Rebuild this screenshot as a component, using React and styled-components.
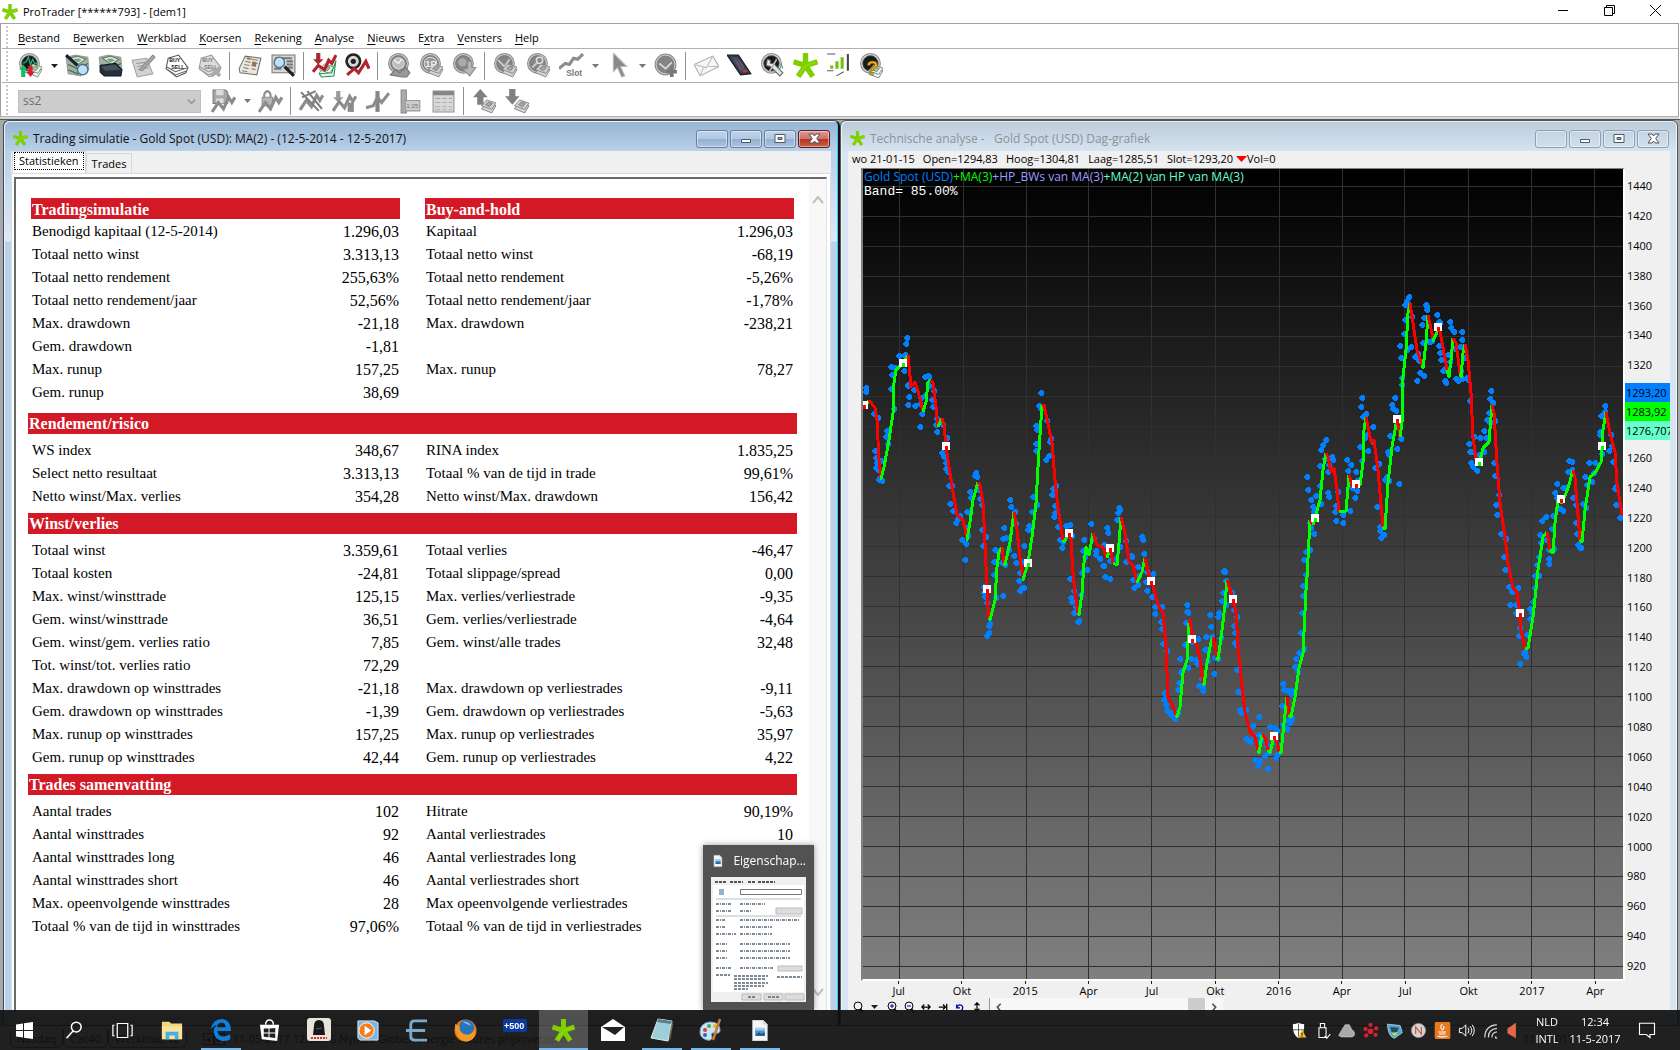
import React from "react";
import styled, { createGlobalStyle, css } from "styled-components";

const GlobalStyle = createGlobalStyle`
  * { box-sizing: border-box; }
  body {
    margin: 0;
    background: #fff;
    color: #000;
    font: 12px/16px "Open Sans", "Noto Sans", sans-serif;
    overflow: hidden;
  }
  svg { display: block; }
`;

const plain = css`
  margin: 0;
  padding: 0;
  border: 0;
  background: none;
  font: inherit;
  color: inherit;
`;

/* ---------- shell ---------- */

const Shell = styled.div`
  display: flex;
  flex-direction: column;
  height: 100vh;
`;

const AppTitle = styled.header`
  display: flex;
  align-items: center;
  height: 23px;
  padding-left: 2px;
  gap: 5px;
  font-size: 11px;
`;

const Caption = styled.div`
  display: flex;
  margin-left: auto;
  height: 20px;
  margin-right: 2px;
  align-self: flex-start;
`;

const CaptionButton = styled.button`
  ${plain}
  width: 46px;
  display: grid;
  place-items: center;
`;

const Bars = styled.div`
  border: 1px solid #a0a0a0;
  border-bottom-color: #b4b4b4;
  margin-right: 1px;
  box-shadow: 0 2px 0 #d8d8d8;
`;

const Bar = styled.div`
  display: flex;
  align-items: center;
  height: ${({ $height }) => $height}px;
  padding: ${({ $top = 0 }) => $top}px 0 0 ${({ $indent }) => $indent}px;
  margin-left: 1px;
  border-bottom: ${({ $last }) => ($last ? "0" : "1px solid #b0b0b0")};
  background: repeating-linear-gradient(#c8c8c8 0 2px, transparent 2px 4px) 4px 2px / 2px 100% no-repeat;
`;

const MenuList = styled.nav`
  display: flex;
  gap: 13px;
  font-size: 11px;
`;

const MenuItem = styled.button`
  ${plain}
  u { text-underline-offset: 2px; }
`;

const ToolButton = styled.button`
  ${plain}
  flex: none;
  width: 33px;
  height: 28px;
  display: grid;
  place-items: center;
`;

const CaretButton = styled.button`
  ${plain}
  width: 14px;
  height: 28px;
  display: grid;
  place-items: center;
`;

const Separator = styled.i`
  width: 1px;
  height: 28px;
  margin: 0 4px 0 3px;
  background: #909090;
`;

const Combo = styled.label`
  position: relative;
  display: flex;
  align-items: center;
  width: 183px;
  height: 23px;
  margin-right: 6px;
  border: 1px solid #bfbfbf;
  background: #ccc;

  select {
    ${plain}
    appearance: none;
    width: 100%;
    height: 100%;
    padding-left: 4px;
    color: #6d6d6d;
    font-size: 12px;
    opacity: 1;
  }

  svg {
    position: absolute;
    right: 4px;
  }
`;

const Workspace = styled.main`
  flex: 1;
  min-height: 0;
  display: grid;
  grid-template-columns: 837fr 838fr;
  margin-top: 2px;
  padding: 0 2px 0 3px;
  border-top: 1px solid #555;
  background: #a8a8a8;
`;

/* ---------- child windows ---------- */

const Window = styled.section`
  display: flex;
  flex-direction: column;
  min-width: 0;
  min-height: 0;
  padding: 0 7px 9px;
  border: 1px solid ${({ $active }) => ($active ? "#3a4a5a" : "#555")};
  border-right: ${({ $active }) => ($active ? "2px solid #111" : "1px solid #555")};
  border-radius: 6px 6px 0 0;
  box-shadow: inset 1px 1px 0 #e8f2fb, inset -1px 0 0 ${({ $active }) => ($active ? "#3cc8f0" : "#eef5fb")};
  background: ${({ $active }) =>
    $active
      ? "linear-gradient(#98b4d2, #b9d1ea 31px, #dde9f6 120px, #b9d1ea 121px)"
      : "linear-gradient(#bccbda, #d7e4f2 31px)"};
`;

const WindowTitle = styled.header`
  display: flex;
  align-items: center;
  flex: none;
  height: 30px;
  padding: 5px 1px 0 2px;
  font-size: 12px;
  color: ${({ $active }) => ($active ? "#111" : "#8c9299")};

  h2 {
    margin: 0 auto 0 5px;
    font: inherit;
    white-space: pre;
  }
`;

const FrameButtons = styled.div`
  display: flex;
  gap: 2px;
`;

const FrameButton = styled.button`
  ${plain}
  width: 32px;
  height: 18px;
  display: grid;
  place-items: center;
  border: 1px solid ${({ $tone }) => (($tone === "close") ? "#5c1a1a" : ($tone === "idle") ? "#8e9fb8" : "#6b7f99")};
  border-radius: 3px;
  box-shadow: inset 0 0 0 1px rgba(255, 255, 255, 0.45);
  background: ${({ $tone }) =>
    $tone === "close"
      ? "linear-gradient(#dc9a92, #cf7267 48%, #b93420 52%, #c9604a)"
      : $tone === "idle"
        ? "linear-gradient(#c5d3e2, #d2dfec)"
        : "linear-gradient(#c0d4ea, #b0c8e2 48%, #93b0d0 52%, #aac4e0)"};
`;

const Client = styled.div`
  flex: 1;
  min-height: 0;
  display: flex;
  flex-direction: column;
  background: #f0f0f0;
`;

/* ---------- statistics window ---------- */

const Tabs = styled.div`
  display: flex;
  align-items: flex-end;
  height: 22px;
  padding-left: 1px;
`;

const Tab = styled.button`
  ${plain}
  height: ${({ $selected }) => ($selected ? 22 : 20)}px;
  padding: ${({ $selected }) => ($selected ? "0 6px 3px" : "0 5px")};
  font-size: 11px;
  border: 1px solid #d9d9d9;
  border-bottom: 0;
  background: ${({ $selected }) => ($selected ? "#fff" : "#f0f0f0")};

  span {
    display: block;
    margin: 0 -4px;
    padding: 0 4px;
    outline: ${({ $selected }) => ($selected ? "1px dotted #000" : "0")};
  }
`;

const TabPanel = styled.div`
  flex: 1;
  min-height: 0;
  display: flex;
  border: 1px solid #dcdcdc;
  padding: 3px 3px 2px 2px;
  background: #fff;
`;

const ReportBox = styled.div`
  flex: 1;
  display: flex;
  border: 2px solid #696969;
  border-right: 1px solid #e3e3e3;
  border-bottom-color: #e3e3e3;
  overflow: hidden;
`;

const Report = styled.div`
  flex: 1;
  padding: 19px 12px 0;
  font: 16px/23px "Liberation Serif", serif;
`;

const Block = styled.table`
  width: calc(100% - 6px);
  margin: ${({ $first }) => ($first ? "0 3px 9px" : "5px 3px 5px")};
  border-collapse: separate;
  border-spacing: 0;
  table-layout: fixed;

  col.value { width: 110px; }
  col.gap { width: 25px; }
  td, th { height: 23px; padding: 0 1px; text-align: left; font-weight: normal; white-space: nowrap; }
  td { text-align: right; }
  tbody th { font-size: 15px; }

  thead th {
    height: 22px;
    line-height: 21px;
    font-weight: bold;
    color: #fff;
    background: linear-gradient(#d31925, #d31925) 0 0 / 100% 21px no-repeat;
  }
  thead td { height: 22px; }
`;

const Section = styled.h3`
  margin: 0;
  height: 21px;
  padding-left: 1px;
  font: bold 16px/21px "Liberation Serif", serif;
  color: #fff;
  background: #d31925;
`;

const VScroll = styled.div`
  width: 17px;
  display: flex;
  flex-direction: column;
  justify-content: space-between;
  align-items: center;
  padding: 16px 0 14px;
  background: #f8f8f8;

  button { ${plain} }
`;

/* ---------- chart window ---------- */

const Quote = styled.div`
  display: flex;
  align-items: center;
  flex: none;
  height: 17px;
  padding: 0 0 2px 4px;
  gap: 8px;
  font-size: 11px;

  span { display: flex; align-items: center; }
`;

const ChartGrid = styled.div`
  flex: 1;
  min-height: 0;
  display: grid;
  grid-template-columns: 1fr 45px;
  grid-template-rows: 1fr 17px;
  padding-left: 13px;
  font-size: 11px;
`;

const Plot = styled.div`
  display: grid;
  min-height: 0;
  border: 2px solid #fff;
  border-left-color: #808080;
  border-top: 1px solid #808080;
  background: linear-gradient(#000, #808080);

  > * { grid-area: 1 / 1; min-height: 0; }
  > svg { width: 100%; height: 100%; }
`;

const Legend = styled.div`
  z-index: 1;
  padding: 0 1px;
  white-space: nowrap;
  font-size: 12px;
`;

const Series = styled.span`
  color: ${({ $color }) => $color};
`;

const Band = styled.div`
  color: #fff;
  font: 13px/14px "Liberation Mono", monospace;
`;

const YAxis = styled.div`
  display: flex;
  flex-direction: column;
  padding: 3px 0 0 2px;

  span { flex: 1; display: flex; align-items: center; min-height: 0; }
`;

const Tags = styled.div`
  flex: 2;
  min-height: 0;
  padding-top: 3px;
  margin-left: -2px;
  overflow: hidden;
`;

const Tag = styled.div`
  height: 19px;
  line-height: 19px;
  padding-left: 1px;
  overflow: hidden;
  background: ${({ $color }) => $color};
`;

const XAxis = styled.div`
  grid-column: 1 / 3;
  display: flex;
  padding: 0 43px 0 6px;

  span {
    flex: 1;
    display: flex;
    flex-direction: column;
    align-items: center;
    line-height: 14px;
  }
  span::before { content: ""; width: 1px; height: 3px; background: #222; }
`;

const ChartTools = styled.div`
  display: flex;
  align-items: center;
  flex: none;
  height: 18px;
  padding-left: 1px;

  > button { ${plain} width: 17px; height: 16px; display: grid; place-items: center; }
`;

const HScroll = styled.div`
  display: flex;
  align-items: center;
  width: 234px;
  height: 18px;
  margin-left: 4px;
  padding: 0 4px;
  border-left: 1px solid #999;
  background: #f7f7f7;

  button { ${plain} }
  i { width: 17px; height: 18px; margin: 0 4px 0 auto; background: #cdcdcd; }
`;

const SheetBar = styled.footer`
  display: flex;
  align-items: center;
  flex: none;
  height: 24px;
  padding: 2px 0 0 10px;
  background: #f0f0f0;
  font-size: 11px;
`;

const Sheet = styled.button`
  ${plain}
  padding: 0 6px;
  height: 18px;
  border: 1px solid #555;
  border-top: 0;
  border-radius: 0 0 6px 6px;
`;

const SheetStep = styled.button`
  ${plain}
  width: 11px;
  height: 12px;
  border: 1px solid #333;
  font-size: 8px;
  line-height: 8px;

  ${Sheet} + & { margin-left: 16px; }
`;

const SheetInfo = styled.span`
  margin-left: ${({ $end }) => ($end ? "auto" : "8px")};
  margin-right: ${({ $end }) => ($end ? "106px" : "0")};
`;

/* ---------- taskbar ---------- */

const TaskBar = styled.footer`
  position: fixed;
  inset: auto 0 0 0;
  display: flex;
  height: 40px;
  background: rgba(16, 16, 16, 0.93);
  color: #fff;
`;

const Task = styled.button`
  ${plain}
  display: grid;
  place-items: center;
  width: 49px;
  background: ${({ $active }) => ($active ? "rgba(255,255,255,.22)" : "none")};
  background-image: ${({ $open }) => ($open ? "linear-gradient(#76b9ed, #76b9ed)" : "none")};
  background-repeat: no-repeat;
  background-position: center bottom;
  background-size: ${({ $active }) => ($active ? "100%" : "40px")} 2px;
`;

const Tray = styled.div`
  display: flex;
  align-items: center;
  margin-left: auto;

  > button { ${plain} width: 24px; height: 40px; display: grid; place-items: center; }
`;

const TrayText = styled.div`
  width: ${({ $width }) => $width}px;
  margin-left: 8px;
  text-align: center;
  font-size: 11px;
  line-height: 17px;
`;

const ActionCenter = styled.button`
  && { width: 58px; padding-right: 8px; }
`;

const Preview = styled.aside`
  position: fixed;
  left: 703px;
  bottom: 40px;
  width: 111px;
  height: 165px;
  padding: 0 8px 8px;
  background: rgba(75, 75, 75, 0.96);
  box-shadow: 0 0 6px rgba(0, 0, 0, 0.4);
  color: #fff;

  header { display: flex; align-items: center; gap: 10px; height: 32px; padding-left: 1px; }
`;

/* ---------- drawings ---------- */

const Ico = ({ size = 25, children, box = 24 }) => (
  <svg width={size} height={size} viewBox={`0 0 ${box} ${box}`} fill="none" aria-hidden="true">
    {children}
  </svg>
);

const Star = ({ size }) => (
  <Ico size={size}>
    <g stroke="#7fce00" strokeWidth="5.2">
      <path d="M12 13V0M12 12 .500 8.500M12 12l11.500-3.500M12 12 5 22.500M12 12l7 10.500" />
    </g>
    <path d="m12 12 10-3M12 12 6 21" stroke="#98e020" strokeWidth="1" />
  </Ico>
);

const Disc = ({ dark, cx = 11, cy = 10, r = 8.500 }) => (
  <>
    <circle cx={cx} cy={cy} r={r + 1} fill={dark ? "#d7d7d7" : "#c9c9c9"} stroke="#8b8b8b" />
    <circle cx={cx} cy={cy} r={r - 1} fill={dark ? "#161b19" : "#858585"} stroke="#6d6d6d" strokeWidth="0.7" />
  </>
);

const Money = ({ live, x = 0, y = 0 }) => (
  <g transform={`translate(${x} ${y})`} stroke={live ? "#66806a" : "#7d7d7d"} strokeWidth="0.8" fill={live ? "#eef7ee" : "#d2d2d2"}>
    <path d="m9 19 5-6 9 3-4 7z" />
    <path d="m9 16 5-5.500 9 3-4 6z" />
    <path d="m13 15 3-2.500 3.500 1.200L17 17z" fill={live ? "#8fd0a0" : "#a5a5a5"} />
  </g>
);

const Zig = ({ color = "#8c8c8c", y = 0 }) => (
  <path d="m1 21 6-9 5 6 5-11 3 5 3-5" transform={`translate(0 ${y})`} stroke={color} strokeWidth="3" />
);

const Lens = ({ x = 15, y = 15 }) => (
  <>
    <path d={x > 12 ? "m1 2 11 10" : "m13 13 9 9"} stroke="#18222c" strokeWidth="3" />
    <circle cx={x} cy={y} r="5" fill="#bfe1f8" stroke="#4a6f8c" strokeWidth="1.300" />
  </>
);

const Notes = () => (
  <>
    <path d="m1 4 9-2 12 2 1 12-8 6-12-2z" fill="#9fb3a4" stroke="#7e8c81" strokeWidth="0.7" />
    <path d="m4 5 8-2 8 3-7 5z" fill="#dfe8df" stroke="#5f7a66" />
    <path d="m3 11 9 4 10-5M3 16l9 4 9-6" stroke="#46604f" />
    <path d="m8 6 5-1 3 2-4 2z" fill="#78a886" />
  </>
);

const Cards = ({ off }) => (
  <>
    <path d="M2 15 4 5l10-3 9 12-2 5-9 4z" fill={off ? "#dcdcdc" : "#fff"} stroke={off ? "#999" : "#555"} />
    <path d="m2 13 9 5 12-4M2 15l9 6 11-4" stroke={off ? "#999" : "#666"} />
    <g fill={off ? "#777" : "#111"} fontFamily="Liberation Sans" fontWeight="bold" fontSize="5">
      <text x="5" y="9">BUY</text>
      <text x="7" y="15">SELL</text>
    </g>
  </>
);

const Paper = () => (
  <>
    <path d="m1 15 6-12 15 2-4 16L2 19z" fill="#eae7df" stroke="#6f6d69" />
    <path d="m8 5 11 2M7 8l5 1m2 0 5 1M6 11l5 1m2 0 4 1M5 14l5 1m3 0 4 1M4 17l5 1" stroke="#87837b" />
    <path d="m14 8 4 1-1 4-4-1zM9 4l3 .5-.5 2-3-.5z" fill="#9d7256" />
  </>
);

const Arrow = ({ up, color, x = 7 }) => (
  <path
    transform={`translate(${x} ${up ? 0 : 15}) scale(1 ${up ? 1 : -1})`}
    d="m0 0 7 8H3v7h-6V8h-4z"
    fill={color}
  />
);

const toolIcons = {
  portfolio: (
    <>
      <Disc dark />
      <path d="m5 10 3-2 2-4 2 7 2-5 2 4h3" stroke="#21b573" strokeWidth="1.200" />
      <Money live />
      <path d="m5 11 4 5H7v7H3v-7H1z" fill="#15bd68" />
      <path d="m12 23-4-5h2v-6h4v6h2z" fill="#d3202b" />
    </>
  ),
  search: <><Notes /><Lens x={17} y={16} /></>,
  wallet: <><Notes /><path d="m2 12 15-2 6 6-1 6H6l-4-4z" fill="#273039" stroke="#111820" /><path d="m3 13 13-2 6 5-15 1z" fill="#46525e" /></>,
  edit: (
    <>
      <path d="m1 7 14-2 6 15-15 3z" fill="#d2d2d2" stroke="#a2a2a2" />
      <path d="m5 10 9-1M6 13l9-1M7 16l10-2" stroke="#999" />
      <path d="m8 16 13-14 2 2-12 13z" fill="#a9a9a9" stroke="#8b8b8b" />
    </>
  ),
  buySell: <Cards />,
  cancelOrder: <><Cards off /><path d="m14 14 8 8m0-8-8 8" stroke="#aaa" strokeWidth="3.500" /></>,
  news: <Paper />,
  newsSearch: <><g transform="translate(0 -1)"><path d="M1 3h22v17H1z" fill="#d9d6cf" stroke="#777" /><path d="M4 6h16M15 9h6m-6 3h6m-6 3h6M3 16h7" stroke="#777" strokeWidth="2" /></g><Lens x={8} y={9} /></>,
  analyse: (
    <>
      <Money live x={-2} />
      <path d="m7 20 12-1 4-12-2 15-12 1z" fill="#e8f5ea" stroke="#279557" />
      <path d="M4 0h4v6h3l-5 5-5-5h3z" fill="#a52a31" />
      <path d="m1 18 5-6 6 4 4-9 3 3 4-8" stroke="#b4232c" strokeWidth="3" />
    </>
  ),
  alarm: <><circle cx="8" cy="8" r="6.500" fill="#d8d8d8" stroke="#222" strokeWidth="2.500" /><circle cx="8" cy="8" r="2.500" fill="#222" /><path d="m2 21 7-6 4 4 7-11 3 7" stroke="#b4232c" strokeWidth="3" /></>,
  gauge: <><Disc cx={12} /><circle cx="12" cy="10" r="5.500" fill="#bdbdbd" stroke="#ddd" /><path d="m12 10 3-4M12 10l-4-3" stroke="#eee" strokeWidth="1.500" /><path d="m4 21 5-5 4 3 6-5 4 5-3 4h-5z" fill="#999" stroke="#777" /></>,
  onePage: <><Disc /><circle cx="11" cy="10" r="6" fill="#999" stroke="#ddd" /><Money /><text x="6" y="13" fill="#eee" fontSize="9" fontWeight="bold" fontFamily="Liberation Sans">1P</text></>,
  globe: <><Disc /><circle cx="10" cy="9" r="4" fill="#aaa" /><path d="M15 8h4v6h4l-6 8-7-7h5z" fill="#b7b7b7" stroke="#8d8d8d" /></>,
  discWave: <><Disc /><path d="m5 7 6 6 5-7" stroke="#d5d5d5" strokeWidth="1.500" /><Money /></>,
  discKey: <><Disc /><circle cx="13" cy="7" r="3" stroke="#e2e2e2" strokeWidth="1.500" /><path d="m11 9-5 5" stroke="#ccc" strokeWidth="2" /><Money /></>,
  slot: <><path d="m0 15 6-5 4 1 4-6 4 1 5-5" stroke="#8c8c8c" strokeWidth="3" /><text x="7" y="22" fill="#777" fontFamily="Liberation Sans" fontWeight="bold" fontSize="8">Slot</text></>,
  cursor: <path d="M7 0v18l4-4 4 9 3-1-4-9h6z" fill="#8a8a8a" stroke="#bbb" />,
  discPlus: <><Disc cx={12} cy={11} r={9} /><path d="m6 10 6 5 6-6" stroke="#ddd" strokeWidth="1.500" /><path d="M18 13v10m-5-5h10" stroke="#777" strokeWidth="3.500" /></>,
  mail: <><path d="m0 11 18-8 6 10-18 9z" fill="#f6f6f6" stroke="#aaa" /><path d="m0 11 12 3 6-11M6 22l3-8M24 13l-10 0" stroke="#bbb" /></>,
  tablet: <><path d="M0 2h11l12 18-10 1z" fill="#343a41" stroke="#1a1d21" /><path d="M4 4h6l9 13-6 1z" fill="#425262" /><path d="m9 8 5 8m-2-8 4 6" stroke="#9c4a77" /><path d="m15 17 4-1 1 2-4 1z" fill="#d0313a" /></>,
  tools: <><Disc dark /><path d="m7 6 3 1v3l3 0 9 9-3 3-9-9-4-1z" fill="#dfe5df" stroke="#667" /><path d="m9 18 7-12" stroke="#bbb" strokeWidth="1.500" /><path d="m20 10 2 5" stroke="#2aa060" /></>,
  star: <Star size={24} />,
  report: <><path d="M1 1h20v16h-4l-7 5 1-5H1z" fill="#fff" /><path d="M21 1v16" stroke="#444" strokeWidth="2" /><path d="m17 18-7 4M1 1h8M1 17h6" stroke="#555" /><path d="M4 15v-3h3v3zm5 0V8h3v7zm5 0V4h3v11z" fill="#76bd11" /></>,
  help: <><Disc dark /><Money live y={1} /><text x="7" y="21" fill="#f2b019" stroke="#80560a" strokeWidth="0.6" fontSize="19" fontWeight="bold" fontFamily="Liberation Sans">?</text></>,
  save: <><path d="M2 1h12l2 2v11H2z" fill="#a8a8a8" stroke="#777" /><path d="M5 1h7v5H5zm0 8h7v5H5z" fill="#ddd" /><Zig y={1} /></>,
  lock: <><path d="M6 9V5q3-6 6 0v4" stroke="#8d8d8d" strokeWidth="2" /><path d="M4 8h10v8H4z" fill="#b5b5b5" stroke="#8d8d8d" /><Zig y={1} /></>,
  zigMix: <><Zig y={-1} /><path d="m2 3 17 18M8 2l14 17M3 8l13-6" stroke="#7d7d7d" strokeWidth="2" /></>,
  zigArrow: <><path d="M4 2h4v6h3l-5 5-5-5h3z" fill="#999" /><Zig /><path d="M15 13h6v9h-6z" fill="#8c8c8c" /></>,
  zigBar: <><path d="M10 2h4v20h-4z" fill="#858585" /><path d="m1 18 7-2 4-8 4 5 7-9" stroke="#8c8c8c" strokeWidth="3" /></>,
  ruler: <><path d="M3 1h5v22H3z" fill="#aaa" stroke="#888" /><path d="M7 11h14v10H7z" fill="#ccc" stroke="#999" /><text x="8" y="18" fill="#777" fontSize="6" fontFamily="Liberation Sans">1:25</text></>,
  table: <><path d="M2 2h20v20H2z" fill="#d9d9d9" stroke="#909090" /><path d="M2 2h20v4H2z" fill="#858585" /><path d="M4 9h5m2 0h4m2 0h3M4 13h5m2 0h4m2 0h3M4 17h5m2 0h4m2 0h3M4 20h5m2 0h4m2 0h3" stroke="#aaa" /></>,
  up: <><Money /><Arrow up color="#808080" x={8} /></>,
  down: <><Money /><Arrow color="#808080" x={7} /></>,
};

const Caret = ({ dim }) => (
  <svg width="7" height="4" viewBox="0 0 7 4"><path d="M0 0h7L3.500 4z" fill={dim ? "#777" : "#222"} /></svg>
);

const Chevron = ({ d, color = "#bfbfbf", width = 12 }) => (
  <svg width={width} height="9" viewBox="0 0 12 9" fill="none"><path d={d} stroke={color} strokeWidth="2" /></svg>
);

const DocIcon = ({ size = 18 }) => (
  <Ico size={size}>
    <path d="M4 0h12l5 5v19H4z" fill="#f4f6f8" stroke="#a9b0b8" />
    <path d="M16 0v5h5" fill="#d0d5da" />
    <path d="M7 9h11v9H7z" fill="#4a93cc" />
    <path d="m7 18 4-4 3 2 4-2v4z" fill="#27506e" />
    <path d="M7 9h11v3H7z" fill="#9ecdf0" />
  </Ico>
);

/* ---------- data ---------- */

const menu = [
  ["", "B", "estand"], ["B", "e", "werken"], ["", "W", "erkblad"], ["", "K", "oersen"], ["", "R", "ekening"],
  ["", "A", "nalyse"], ["", "N", "ieuws"], ["E", "x", "tra"], ["", "V", "ensters"], ["", "H", "elp"],
];

const mainTools = [
  "portfolio", "caret", "search", "wallet", "edit", "buySell", "cancelOrder", "|", "news", "newsSearch", "|",
  "analyse", "alarm", "|", "gauge", "onePage", "globe", "|", "discWave", "discKey", "slot", "caret-dim", "cursor",
  "caret-dim", "discPlus", "|", "mail", "tablet", "tools", "star", "report", "help",
];

const systemTools = [
  "save", "caret-dim", "lock", "|", "zigMix", "zigArrow", "zigBar", "ruler", "table", "|", "up", "down",
];

const simulation = [
  ["Benodigd kapitaal (12-5-2014)", "1.296,03", "Kapitaal", "1.296,03"],
  ["Totaal netto winst", "3.313,13", "Totaal netto winst", "-68,19"],
  ["Totaal netto rendement", "255,63%", "Totaal netto rendement", "-5,26%"],
  ["Totaal netto rendement/jaar", "52,56%", "Totaal netto rendement/jaar", "-1,78%"],
  ["Max. drawdown", "-21,18", "Max. drawdown", "-238,21"],
  ["Gem. drawdown", "-1,81", "", ""],
  ["Max. runup", "157,25", "Max. runup", "78,27"],
  ["Gem. runup", "38,69", "", ""],
];

const sections = [
  {
    title: "Rendement/risico",
    rows: [
      ["WS index", "348,67", "RINA index", "1.835,25"],
      ["Select netto resultaat", "3.313,13", "Totaal % van de tijd in trade", "99,61%"],
      ["Netto winst/Max. verlies", "354,28", "Netto winst/Max. drawdown", "156,42"],
    ],
  },
  {
    title: "Winst/verlies",
    rows: [
      ["Totaal winst", "3.359,61", "Totaal verlies", "-46,47"],
      ["Totaal kosten", "-24,81", "Totaal slippage/spread", "0,00"],
      ["Max. winst/winsttrade", "125,15", "Max. verlies/verliestrade", "-9,35"],
      ["Gem. winst/winsttrade", "36,51", "Gem. verlies/verliestrade", "-4,64"],
      ["Gem. winst/gem. verlies ratio", "7,85", "Gem. winst/alle trades", "32,48"],
      ["Tot. winst/tot. verlies ratio", "72,29", "", ""],
      ["Max. drawdown op winsttrades", "-21,18", "Max. drawdown op verliestrades", "-9,11"],
      ["Gem. drawdown op winsttrades", "-1,39", "Gem. drawdown op verliestrades", "-5,63"],
      ["Max. runup op winsttrades", "157,25", "Max. runup op verliestrades", "35,97"],
      ["Gem. runup op winsttrades", "42,44", "Gem. runup op verliestrades", "4,22"],
    ],
  },
  {
    title: "Trades samenvatting",
    rows: [
      ["Aantal trades", "102", "Hitrate", "90,19%"],
      ["Aantal winsttrades", "92", "Aantal verliestrades", "10"],
      ["Aantal winsttrades long", "46", "Aantal verliestrades long", ""],
      ["Aantal winsttrades short", "46", "Aantal verliestrades short", ""],
      ["Max. opeenvolgende winsttrades", "28", "Max opeenvolgende verliestrades", ""],
      ["Totaal % van de tijd in winsttrades", "97,06%", "Totaal % van de tijd in verliestrades", ""],
    ],
  },
];

// g = rising leg, r = falling leg; each leg continues from the last point
const trend = `g 864,408 869,400 r 875,408 877,420 879,460 881,478 g 881,479 884,467 889,440 893,413 894,383 896,370 903,363
908,355 r 911,387 915,382 920,398 923,412 g 926,402 928,382 931,380 r 933,383 936,407 938,427 g 942,418 r 944,425 946,446
949,467 953,492 957,515 963,520 967,538 g 967,540 970,522 973,500 978,482 r 980,485 983,503 985,543 987,589 988,607 989,618
g 990,620 995,600 997,567 999,552 1002,547 r 1004,563 g 1005,565 1010,542 1014,512 r 1017,530 1020,558 1023,577 g 1023,580
1028,563 1032,537 1036,503 1039,450 1042,405 r 1044,405 1052,443 1055,480 1058,508 1063,540 g 1064,542 1069,533 r 1071,540
1073,573 1075,593 1078,613 g 1079,615 1082,593 1084,563 1086,547 1089,555 1093,533 r 1097,545 1103,547 1107,558 g 1110,548
r 1113,563 g 1117,565 1119,543 1121,517 r 1125,533 1129,562 1133,565 1137,583 g 1142,572 1145,558 r 1148,572 1152,582
1158,605 1163,613 1166,647 1168,697 1173,707 1176,715 g 1177,717 1180,707 1183,673 1187,660 1189,623 r 1190,620 1193,640
1197,645 1200,660 1203,683 g 1204,685 1207,663 1211,642 1213,637 r 1217,657 g 1218,660 1222,630 1225,605 1227,580
r 1233,599 1236,613 1238,647 1242,687 1245,712 1250,732 1255,737 1258,750 g 1259,753 1262,735 r 1265,737 1268,750
g 1270,753 1274,736 r 1276,735 1279,752 g 1281,753 1284,723 1287,697 r 1289,715 g 1291,717 1295,697 1299,668 1303,653
1306,590 1307,577 1310,520 r 1313,525 g 1315,518 1320,500 1323,470 1326,453 r 1328,457 1331,472 1334,468 1337,490 1339,512
g 1346,511 1349,475 r 1353,488 g 1356,485 1360,485 1363,463 1364,430 1366,417 r 1371,442 1374,440 1378,470 1383,527
g 1385,529 1388,483 1392,447 1397,419 r 1400,437 g 1402,423 1403,377 1406,350 1408,313 1410,303 r 1413,323 1417,350 1422,365
g 1423,368 1426,343 1428,315 r 1433,338 g 1433,341 1438,330 r 1439,327 1443,347 1447,370 g 1449,377 1451,360 1453,338
r 1456,343 1460,373 g 1461,377 1463,353 1465,344 r 1468,360 1471,393 1473,437 1476,460 g 1480,461 1483,448 1489,442 1491,417
1492,405 r 1494,413 1497,463 1500,503 1505,537 1508,563 1513,588 1517,592 1519,607 1521,630 1525,649 g 1528,648 1533,617
1538,570 1543,537 1547,532 r 1550,550 g 1553,553 1555,523 1558,500 1562,503 1568,488 1573,470 r 1575,478 1577,503 1580,540
g 1582,542 1585,510 1590,477 1595,473 1601,462 1603,430 1606,412 r 1610,433 1615,452 1617,483 1622,515`;

const quotes = `866,388 907,338 906,344 899,356 905,356 891,367 892,375 887,431 886,437 875,451 876,458 877,463 878,470 879,480
908,386 909,397 908,405 915,406 925,377 929,377 920,427 922,414 932,400 936,425 937,432 942,453 944,457 946,463 948,472
949,486 950,504 953,511 956,523 962,540 965,560 976,473 975,476 970,492 971,498 967,512 980,499 982,530 983,546 984,587
985,597 989,633 987,636 1003,596 994,562 995,550 1010,500 1011,507 1004,528 1006,538 1014,556 1016,563 1024,546 1019,581
1020,591 1022,588 1029,526 1028,530 1032,512 1033,497 1036,451 1036,426 1037,430 1041,393 1039,406 1047,421 1046,460
1049,456 1050,442 1052,495 1053,489 1054,517 1055,513 1058,527 1060,540 1066,526 1071,598 1072,602 1074,613 1078,622
1082,573 1084,540 1087,570 1091,524 1096,555 1100,559 1107,528 1108,533 1103,566 1105,577 1110,579 1119,508 1120,510
1117,520 1131,556 1142,537 1143,540 1133,580 1134,588 1138,567 1146,582 1147,591 1152,597 1155,614 1161,622 1162,629
1163,644 1165,694 1164,700 1166,705 1167,711 1171,715 1175,719 1180,659 1179,683 1178,690 1181,673 1187,605 1188,613
1185,645 1191,659 1199,686 1203,688 1196,660 1206,637 1205,650 1210,615 1211,627 1214,674 1218,617 1219,613 1222,601
1224,571 1225,572 1226,581 1223,593 1234,610 1234,626 1235,633 1236,645 1237,670 1238,692 1240,710 1241,713 1246,739
1250,742 1255,760 1258,766 1268,769 1259,717 1253,726 1265,756 1270,727 1278,754 1283,684 1284,690 1282,706 1287,729
1290,723 1291,694 1295,667 1296,659 1299,653 1301,633 1302,613 1303,586 1304,560 1306,552 1307,477 1308,490 1311,500
1310,550 1314,534 1313,507 1316,496 1320,486 1321,450 1323,445 1326,440 1328,493 1329,497 1332,457 1335,512 1336,521
1343,523 1347,460 1350,511 1355,498 1356,472 1351,465 1362,398 1361,407 1363,417 1366,414 1360,447 1368,451 1373,427
1375,468 1377,507 1380,527 1381,538 1385,480 1387,477 1388,452 1390,436 1392,405 1393,409 1395,398 1396,411 1397,449
1399,484 1400,346 1401,358 1402,378 1404,334 1405,320 1406,305 1407,301 1409,297 1411,347 1415,357 1417,381 1420,373
1422,325 1424,318 1426,305 1427,310 1429,342 1437,315 1439,346 1441,360 1443,371 1445,381 1446,383 1450,322 1451,328
1448,355 1456,379 1458,381 1462,332 1462,340 1467,378 1468,380 1469,444 1470,452 1471,463 1473,467 1477,471 1480,438
1484,431 1487,420 1489,413 1490,399 1491,391 1495,476 1496,505 1497,515 1501,534 1504,557 1505,570 1509,587 1510,605
1516,605 1519,636 1520,664 1524,654 1527,635 1530,619 1530,609 1533,602 1535,588 1535,576 1537,565 1539,557 1541,543
1542,521 1546,517 1549,564 1549,559 1553,516 1555,493 1557,484 1563,488 1560,509 1568,472 1569,461 1573,498 1576,523
1577,534 1578,545 1580,548 1583,504 1585,477 1589,463 1592,482 1595,463 1600,435 1601,416 1605,412 1609,451 1613,462
1615,489 1616,505 1620,518`;

const signals = [
  [864, 405, "r"], [903, 363, "g"], [946, 446, "r"], [987, 589, "r"], [1028, 563, "g"], [1069, 533, "r"],
  [1110, 548, "r"], [1151, 581, "r"], [1192, 639, "r"], [1233, 599, "r"], [1274, 736, "r"], [1315, 518, "g"],
  [1356, 484, "r"], [1397, 419, "r"], [1438, 327, "r"], [1479, 462, "g"], [1520, 613, "r"], [1561, 499, "r"],
  [1602, 446, "g"],
];

const lineColor = { g: "#00ff00", r: "#ff0000" };
const months = ["Jul", "Okt", "2015", "Apr", "Jul", "Okt", "2016", "Apr", "Jul", "Okt", "2017", "Apr"];
const monthLines = [899, 963, 1026, 1088, 1151, 1215, 1279, 1342, 1404, 1468, 1531, 1594];
const range = (from, to) => Array.from({ length: (from - to) / 20 + 1 }, (_, i) => from - i * 20);

const legs = [];
trend.trim().split(/\s+/).forEach((token) => {
  if (token === "g" || token === "r") {
    const prev = legs[legs.length - 1];
    legs.push({ dir: token, points: prev ? [prev.points[prev.points.length - 1]] : [] });
  } else {
    legs[legs.length - 1].points.push(token);
  }
});

// closes run a little ahead of the averages, spread around the same path
const spread = legs.flatMap(({ points }, k) =>
  points.slice(1).map((point, i) => {
    const [x, y] = point.split(",").map(Number);
    return [x - 3 + ((k + i) % 3) * 2, y + (((k * 7 + i * 5) % 9) - 4) * 2];
  })
);

const dots = quotes.split(/\s+/).map((q) => q.split(",").map(Number)).concat(spread);

/* ---------- parts ---------- */

const ToolStrip = ({ items }) =>
  items.map((name, i) => {
    if (name === "|") return <Separator key={i} />;
    if (name.startsWith("caret")) {
      return <CaretButton key={i} aria-label="Meer"><Caret dim={name === "caret-dim"} /></CaretButton>;
    }
    return <ToolButton key={i} aria-label={name}><Ico>{toolIcons[name]}</Ico></ToolButton>;
  });

const WindowFrame = ({ title, active, children }) => {
  const tone = active ? "live" : "idle";
  return (
    <Window $active={active}>
      <WindowTitle $active={active}>
        <Star size={15} />
        <h2>{title}</h2>
        <FrameButtons>
          <FrameButton $tone={tone} aria-label="Vastzetten" />
          <FrameButton $tone={tone} aria-label="Minimaliseren">
            <svg width="12" height="12"><path d="M1.500 6.500h9v3h-9z" fill="#fff" stroke="#4d5868" /></svg>
          </FrameButton>
          <FrameButton $tone={tone} aria-label="Maximaliseren">
            <svg width="12" height="12"><path d="M1 1.500h10v8H1z" fill="#fff" stroke="#4d5868" /><path d="M4 4.500h4v2H4z" fill="#9ab" stroke="#4d5868" /></svg>
          </FrameButton>
          <FrameButton $tone={active ? "close" : "idle"} aria-label="Sluiten">
            <svg width="13" height="11" viewBox="0 0 13 11">
              <path d="M1 1h4l1.500 2L8 1h4L8.700 5.500 12 10H8L6.500 8 5 10H1l3.300-4.500z" fill="#fff" stroke="#4d5060" />
            </svg>
          </FrameButton>
        </FrameButtons>
      </WindowTitle>
      <Client>{children}</Client>
    </Window>
  );
};

const Rows = ({ rows, head, first }) => (
  <Block $first={first}>
    <colgroup>
      <col /><col className="value" /><col className="gap" /><col /><col className="value" />
    </colgroup>
    {head && (
      <thead>
        <tr><th colSpan={2}>{head[0]}</th><td /><th colSpan={2}>{head[1]}</th></tr>
      </thead>
    )}
    <tbody>
      {rows.map(([left, a, right, b]) => (
        <tr key={left}>
          <th scope="row">{left}</th><td>{a}</td><td /><th scope="row">{right}</th><td>{b}</td>
        </tr>
      ))}
    </tbody>
  </Block>
);

const StatisticsWindow = () => (
  <WindowFrame active title="Trading simulatie - Gold Spot (USD): MA(2) - (12-5-2014 - 12-5-2017)">
    <Tabs role="tablist">
      <Tab role="tab" aria-selected="true" $selected><span>Statistieken</span></Tab>
      <Tab role="tab" aria-selected="false"><span>Trades</span></Tab>
    </Tabs>
    <TabPanel>
      <ReportBox>
        <Report>
          <Rows first head={["Tradingsimulatie", "Buy-and-hold"]} rows={simulation} />
          {sections.map(({ title, rows }) => (
            <React.Fragment key={title}>
              <Section>{title}</Section>
              <Rows rows={rows} />
            </React.Fragment>
          ))}
        </Report>
        <VScroll>
          <button aria-label="Omhoog"><Chevron d="m1 8 5-6 5 6" /></button>
          <button aria-label="Omlaag"><Chevron d="m1 1 5 6 5-6" /></button>
        </VScroll>
      </ReportBox>
    </TabPanel>
  </WindowFrame>
);

const PriceChart = () => (
  <svg viewBox="863 169 760 810" preserveAspectRatio="none" role="img" aria-label="Gold Spot (USD)">
    <g stroke="#303030" shapeRendering="crispEdges">
      {range(1440, 920).map((v, i) => <line key={v} x1="863" x2="1623" y1={186.500 + i * 30} y2={186.500 + i * 30} />)}
      {monthLines.map((x) => <line key={x} x1={x + 0.500} x2={x + 0.500} y1="169" y2="979" />)}
    </g>
    <g fill="#0080ff" shapeRendering="crispEdges">
      {dots.map(([x, y], i) => <path key={i} d={`M${x - 1} ${y - 3}h2l2 2v2l-2 2h-2l-2-2v-2z`} />)}
    </g>
    <g fill="none" strokeWidth="3" strokeLinejoin="round" shapeRendering="crispEdges">
      {legs.map(({ dir, points }, i) => <polyline key={i} points={points.join(" ")} stroke={lineColor[dir]} />)}
    </g>
    {signals.map(([x, y, dir]) => (
      <g key={x}>
        <rect x={x - 4} y={y - 4} width="8" height="8" fill="#fff" />
        <path d={`M${x - 1} ${y + 4}v-4h3v4z`} fill={lineColor[dir]} />
      </g>
    ))}
  </svg>
);

const ChartWindow = () => (
  <WindowFrame title="Technische analyse -   Gold Spot (USD) Dag-grafiek">
    <Quote>
      <span>wo 21-01-15</span><span>Open=1294,83</span><span>Hoog=1304,81</span><span>Laag=1285,51</span>
      <span>
        Slot=1293,20&nbsp;
        <svg width="11" height="6"><path d="M0 0h11L5.500 6z" fill="#f00" /></svg>
        Vol=0
      </span>
    </Quote>
    <ChartGrid>
      <Plot>
        <PriceChart />
        <Legend>
          <Series $color="#0080ff">Gold Spot (USD)</Series>
          <Series $color="#00ff00">+MA(3)</Series>
          <Series $color="#9c9cff">+HP_BWs van MA(3)</Series>
          <Series $color="#66ffcc">+MA(2) van HP van MA(3)</Series>
          <Band>Band= 85.00%</Band>
        </Legend>
      </Plot>
      <YAxis>
        {range(1440, 1320).map((v) => <span key={v}>{v}</span>)}
        <Tags>
          <Tag $color="#0080ff">1293,20</Tag>
          <Tag $color="#00ff00">1283,92</Tag>
          <Tag $color="#66ffcc">1276,707</Tag>
        </Tags>
        {range(1260, 920).map((v) => <span key={v}>{v}</span>)}
      </YAxis>
      <XAxis>{months.map((m, i) => <span key={i}>{m}</span>)}</XAxis>
    </ChartGrid>
    <ChartTools>
      <button aria-label="Zoom"><Ico size={12} box={12}><circle cx="6" cy="5" r="4" stroke="#000" /><path d="m8 8 3 3" stroke="#000" strokeWidth="2" /></Ico></button>
      <button aria-label="Meer"><Caret /></button>
      <button aria-label="Inzoomen"><Ico size={12} box={12}><circle cx="6" cy="5" r="4" stroke="#000" /><path d="M6 3v4M4 5h4" stroke="#00a" /><path d="m8 8 3 3" stroke="#000" strokeWidth="2" /></Ico></button>
      <button aria-label="Uitzoomen"><Ico size={12} box={12}><circle cx="6" cy="5" r="4" stroke="#000" /><path d="M4 5h4" stroke="#00a" /><path d="m8 8 3 3" stroke="#000" strokeWidth="2" /></Ico></button>
      <button aria-label="Breedte"><Ico size={10} box={12}><path d="M1 6h10M4 3 1 6l3 3M8 3l3 3-3 3" stroke="#000" strokeWidth="1.500" /></Ico></button>
      <button aria-label="Einde"><Ico size={10} box={12}><path d="M1 6h8M6 3l3 3-3 3M10.500 2v8" stroke="#000" strokeWidth="1.500" /></Ico></button>
      <button aria-label="Herstel"><Ico size={10} box={12}><path d="M2 3v4h4M2 7q2-5 6-3 3 3-1 7" stroke="#00a" strokeWidth="1.500" /></Ico></button>
      <button aria-label="Hoogte"><Ico size={10} box={12}><path d="M6 1v10M3 4l3-3 3 3M3 8l3 3 3-3" stroke="#000" strokeWidth="1.500" /></Ico></button>
      <HScroll>
        <button aria-label="Links"><Chevron d="M8 0 4 4l4 5" color="#555" width={10} /></button>
        <i />
        <button aria-label="Rechts"><Chevron d="m4 0 4 4-4 5" color="#555" width={10} /></button>
      </HScroll>
    </ChartTools>
  </WindowFrame>
);

const tasks = [
  { name: "Start", icon: <Ico size={17} box={17}><path d="M0 2.500 7 1.500v6.500H0zM8 1.300 17 0v8H8zM0 9h7v6.500l-7-1zM8 9h9v8l-9-1.300z" fill="#fff" /></Ico> },
  { name: "Zoeken", icon: <Ico size={18}><circle cx="15" cy="8" r="6.500" stroke="#fff" strokeWidth="2" /><path d="m11 13-9 10" stroke="#fff" strokeWidth="2" /></Ico> },
  { name: "Taakweergave", icon: <Ico size={21}><path d="M6 4h12v16H6zM3 6H1v12h2M21 6h2v12h-2" stroke="#fff" strokeWidth="1.400" /></Ico> },
  { name: "Verkenner", icon: <Ico size={22}><path d="M1 3h8l2 2h12v17H1z" fill="#f6d67a" /><path d="M1 8h22v14H1z" fill="#fbe29a" /><path d="M5 22v-8h14v8h-4v-4H9v4z" fill="#42b1e8" /></Ico> },
  { name: "Edge", open: true, icon: <Ico size={22}><path d="M1 11Q3 0 13 0q10 1 10 13H8q1 6 7 6 4 0 7-2v5q-3 2-8 2-9-1-10-10 0-6 5-8Q4 7 1 11m7-2h9q0-5-4.500-5T8 9" fill="#0f7fdc" /></Ico> },
  { name: "Store", icon: <Ico size={23}><path d="M2 6h20l-2 17-16-2z" fill="#fff" /><path d="M8 6q0-5 4-5t4 5" stroke="#fff" strokeWidth="1.500" /><path d="M6 10h5v4H6zm6 0 6-.5V14h-6zM6 15h5v4l-5-.6zm6 0h6v4.700l-6-.6z" fill="#222" /></Ico> },
  { name: "Adelaar", icon: <Ico size={24}><rect width="24" height="23" rx="3" fill="#e9e3da" /><path d="M6 17l1-9q0-6 5-6t5 6l1 9z" fill="#16171b" /><path d="m9 11 6-1" stroke="#657" /><path d="M4 20h16" stroke="#c33" strokeWidth="2" strokeDasharray="2 1" /></Ico> },
  { name: "Mediaspeler", icon: <Ico size={23}><path d="M2 2h17l4 2v18H4l-2-2z" fill="#7fb4dc" stroke="#d9eaf6" /><circle cx="11" cy="12" r="8" fill="#f08020" stroke="#fff" /><path d="m9 7 7 5-7 5z" fill="#fff" /></Ico> },
  { name: "E-koers", icon: <Ico size={23}><path d="M23 2H10Q6 2 6 6v12q0 4 4 4h13M1 12h20" stroke="#78a9cc" strokeWidth="3" /></Ico> },
  { name: "Firefox", icon: <Ico size={23}><circle cx="12" cy="12" r="11.500" fill="#e8761c" /><circle cx="13" cy="9" r="8" fill="#2a74bd" /><path d="M1 5q2 3 5 2-1 7 5 9 7 2 11-6 2 12-9 13.500Q1 22 1 5" fill="#f39a24" /><path d="M9 3q6-1 9 4-5-2-9-4" fill="#7fc3ee" /></Ico> },
  { name: "Plus500", icon: <Ico size={24}><rect y="1" width="24" height="13" rx="2" fill="#0b3a9c" /><text x="1" y="11" fill="#fff" fontSize="9" fontWeight="bold" fontFamily="Liberation Sans">+500</text></Ico> },
  { name: "ProTrader", open: true, active: true, icon: <Star size={23} /> },
  { name: "Mail", icon: <Ico size={24}><path d="m0 9 12-8 12 8v14H0z" fill="#fff" /><path d="M1 9h22l-9 8z" fill="#222" /></Ico> },
  { name: "Kladblok", open: true, icon: <Ico size={24}><path d="m8 1 14 2-4 20-17-3z" fill="#9ccfdc" stroke="#dbeef2" /><path d="m8 1 14 2-1 3L7 4z" fill="#5d7f8b" /><path d="m19 18 3-14 1 2-3 17z" fill="#7a6a58" /></Ico> },
  { name: "Paint", open: true, icon: <Ico size={24}><path d="M1 14Q1 5 11 4q10 0 10 8 0 4-5 3t-3 4q0 4-5 3-7-2-7-8" fill="#c9e2f4" stroke="#7fa7c4" /><circle cx="6" cy="12" r="2" fill="#e03a3a" /><circle cx="10" cy="8" r="2" fill="#44b050" /><circle cx="16" cy="8" r="2" fill="#e8b02a" /><circle cx="6" cy="17" r="2" fill="#2b62c8" /><path d="M14 22 21 1" stroke="#c57b36" strokeWidth="2.500" /></Ico> },
  { name: "Eigenschappen", open: true, icon: <DocIcon size={21} /> },
];

const tray = [
  ["Beveiliging", <><path d="M4 3q5 0 8-2 3 2 8 2 1 14-8 20Q3 17 4 3" fill="#fff" /><path d="M12 2v20M4 11h16" stroke="#222" /><path d="m17 11 6 11H11z" fill="#f7c325" /><path d="M17 15v4m0 1v1" stroke="#222" strokeWidth="1.500" /></>],
  ["USB", <path d="M7 8h10v14H7zM9 8V2h6v6M15 20l3 3 5-6" stroke="#fff" strokeWidth="1.500" />],
  ["OneDrive", <path d="m1 19 4-7 5-8h6l3 6 4 4v5l-3 2H5z" fill="#a9a9a9" stroke="#ccc" />],
  ["Update", <g fill="#d8232f"><circle cx="12" cy="13" r="4" /><circle cx="5" cy="10" r="3" /><circle cx="12" cy="4" r="3" /><circle cx="20" cy="9" r="3" /><circle cx="19" cy="18" r="3" /><circle cx="6" cy="19" r="3" /></g>],
  ["Netwerkschijf", <><path d="m2 3 18 2 3 10-11 8Q3 21 2 3" fill="#4da5d5" stroke="#cfe5ef" /><path d="m6 7 12 1-3 7-7-1z" fill="#264c64" /><path d="m7 16 10-2-4 6z" fill="#bfd94d" /></>],
  ["Norton", <><circle cx="12" cy="12" r="10" fill="#d6d2cd" stroke="#999" /><path d="M8 17V7l8 10V7" stroke="#c54b3b" strokeWidth="1.500" /></>],
  ["Java", <><rect x="1" y="0" width="22" height="24" rx="2" fill="#e57a21" /><path d="M12 3q-5 4 0 8 4-3 1-5M6 14h11M7 17h9M5 20q7 2 14 0" stroke="#fff" strokeWidth="1.500" /></>],
  ["Volume", <path d="M2 9h4l5-5v16l-5-5H2zM14 8q3 4 0 8M17 6q5 6 0 12M20 4q6 8 0 16" stroke="#fff" strokeWidth="1.400" />],
  ["Wifi", <path d="M21 22a1 1 0 1 1-1-1M14 22q0-7 7-8M9 22q0-12 12-13M4 22Q4 5 21 4" stroke="#ddd" strokeWidth="1.600" />],
  ["Geluid", <path d="M2 9 14 1v22L2 16z" fill="#e4674c" />],
];

const propertyRows = [
  [27, 16, 25], [34, 16, 12], [43, 10, 60], [50, 10, 32], [57, 20, 32], [67, 11, 50], [74, 11, 50], [81, 11, 50], [91, 15, 34],
];

const PreviewThumb = () => (
  <svg width="95" height="125" viewBox="0 0 95 125" aria-hidden="true">
    <path d="M0 0h95v125H0z" fill="#f0f0f0" />
    <path d="M2 8h91v107H2z" fill="#fff" />
    <path d="M4 5h12M19 5h13M37 5h7M47 5h17" stroke="#555" strokeWidth="2" strokeDasharray="3 1" />
    <path d="M8 12h5v6H8z" fill="#8fb4cc" />
    <path d="M29.500 12.500h61v5h-61z" stroke="#777" fill="#fff" />
    <path d="M5 22h85M5 39h85" stroke="#bbb" />
    <path d="M65 31h26v6H65zM67 89h24v5H67zM31 117h19v6H31zM53 117h19v6H53zM74 117h19v6H74z" fill="#ddd" stroke="#bbb" />
    {propertyRows.map(([y, label, value]) => (
      <path key={y} d={`M5 ${y}h${label}M29 ${y}h${value}`} stroke="#567" strokeWidth="1.500" strokeDasharray="3 1 1 1" />
    ))}
    <path d="M5 98h14M23 99h34M23 102h32M23 106h34M23 109h30M23 112h14M66 100h25M37 120h7M57 120h12" stroke="#567" strokeWidth="1.500" strokeDasharray="3 1" />
  </svg>
);

const App = () => (
  <>
    <GlobalStyle />
    <Shell>
      <AppTitle>
        <Star size={16} />
        <span>ProTrader [******793] - [dem1]</span>
        <Caption>
          <CaptionButton aria-label="Minimaliseren"><svg width="10" height="10"><path d="M0 5.500h10" stroke="#000" /></svg></CaptionButton>
          <CaptionButton aria-label="Verkleinen"><svg width="11" height="11" fill="none"><path d="M.5 2.500h8v8h-8zM2.500 2.500v-2h8v8h-2" stroke="#000" /></svg></CaptionButton>
          <CaptionButton aria-label="Sluiten"><svg width="11" height="11"><path d="m0 0 11 11M11 0 0 11" stroke="#000" /></svg></CaptionButton>
        </Caption>
      </AppTitle>
      <Bars>
        <Bar $height={25} $indent={16} $top={3}>
          <MenuList>
            {menu.map(([pre, key, post]) => <MenuItem key={post}>{pre}<u>{key}</u>{post}</MenuItem>)}
          </MenuList>
        </Bar>
        <Bar $height={34} $indent={12}><ToolStrip items={mainTools} /></Bar>
        <Bar $height={33} $indent={16} $top={3} $last>
          <Combo>
            <select disabled aria-label="Systeem"><option>ss2</option></select>
            <Chevron d="m1 2 5 5 5-5" color="#999" width={9} />
          </Combo>
          <ToolStrip items={systemTools} />
        </Bar>
      </Bars>
      <Workspace>
        <StatisticsWindow />
        <ChartWindow />
      </Workspace>
      <SheetBar>
        <Sheet>Nasdaq</Sheet><Sheet>Cac40</Sheet><Sheet>Werkblad 12</Sheet>
        <SheetStep aria-label="Vorige">◂</SheetStep><SheetStep aria-label="Volgende">▸</SheetStep>
        <SheetInfo>11-05-2017 12:30:15 Nymex Globex energie futures prijsoverzicht</SheetInfo>
        <SheetInfo $end>11-5-2017</SheetInfo>
      </SheetBar>
    </Shell>
    <Preview>
      <header><DocIcon size={14} /><span>Eigenschap...</span></header>
      <PreviewThumb />
    </Preview>
    <TaskBar>
      {tasks.map(({ name, icon, open, active }) => (
        <Task key={name} aria-label={name} $open={open} $active={active}>{icon}</Task>
      ))}
      <Tray>
        {tray.map(([name, icon]) => <button key={name} aria-label={name}><Ico size={17}>{icon}</Ico></button>)}
        <TrayText $width={26}>NLD<br />INTL</TrayText>
        <TrayText $width={54}>12:34<br />11-5-2017</TrayText>
        <ActionCenter aria-label="Meldingen">
          <Ico size={18}><path d="M2 3h20v15h-6v4l-5-4H2z" stroke="#fff" strokeWidth="1.500" /></Ico>
        </ActionCenter>
      </Tray>
    </TaskBar>
  </>
);

export default App;
